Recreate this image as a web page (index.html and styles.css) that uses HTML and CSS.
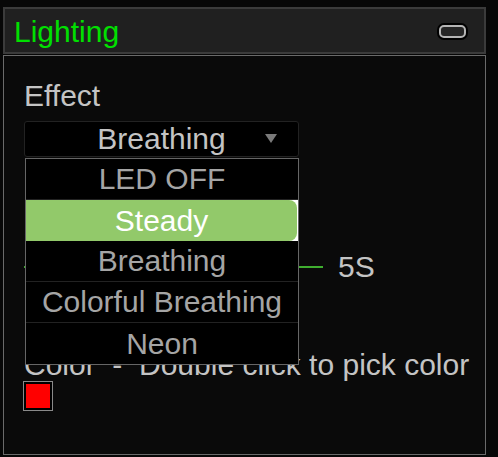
FILE: index.html
```html
<!DOCTYPE html>
<html lang="en">
<head>
    <meta charset="UTF-8">
    <meta name="viewport" content="width=device-width, initial-scale=1.0">
    <title>Lighting</title>
    <link rel="stylesheet" href="styles.css">
</head>
<body>

    <section class="panel">
        <header class="panel-header">
            <h1>Lighting</h1>
            <button class="btn-min" aria-label="Minimize"></button>
        </header>

        <div class="panel-body">
            <div class="field-label">Effect</div>
            <div class="select">
                <span class="select-value">Breathing</span>
                <span class="select-arrow"></span>

                <ul class="select-list">
                    <li>LED OFF</li>
                    <li class="active"><span>Steady</span></li>
                    <li>Breathing</li>
                    <li>Colorful Breathing</li>
                    <li>Neon</li>
                </ul>
            </div>

            <div class="field-label speed-label">Speed</div>
            <div class="slider-row">
                <div class="slider-track"></div>
                <span class="slider-value">5S</span>
            </div>

            <div class="field-label color-label">Color &nbsp;- &nbsp;Double click to pick color</div>
            <div class="swatch"><div class="swatch-fill"></div></div>
        </div>
    </section>

</body>
</html>
```

FILE: styles.css
```css
* {
    box-sizing: border-box;
}

body {
    margin: 0;
    background-color: #070707;
    font-family: 'Liberation Sans', Arial, sans-serif;
    width: 498px;
    height: 457px;
    overflow: hidden;
}

.panel {
    width: 483px;
    margin: 7px 0 0 3px;
}

.panel-header {
    height: 47px;
    background-color: #202020;
    border: 2px solid #3b3b3b;
    display: flex;
    align-items: center;
    justify-content: space-between;
    padding: 0 18px 0 9px;
}

.panel-header h1 {
    margin: 0;
    font-size: 30px;
    font-weight: normal;
    color: #00e000;
    line-height: 30px;
    padding-top: 2px;
}

.btn-min {
    width: 27px;
    height: 13px;
    padding: 0;
    background-color: #262626;
    border: 2px solid #b5b5b5;
    border-radius: 5px;
    box-shadow: 0 0 0 2px #000;
    margin-top: 1px;
}

.panel-body {
    height: 400px;
    margin-top: 1px;
    border: 1px solid #6a6a6a;
    background-color: #0a0a0a;
    padding: 25px 20px 0 20px;
}

.field-label {
    font-size: 30px;
    line-height: 30px;
    height: 30px;
    color: #c4c4c4;
    white-space: nowrap;
}

/* select + open list */
.select {
    position: relative;
    width: 275px;
    height: 36px;
    margin-top: 10px;
    background-color: #000;
    border: 1px solid #222;
    border-radius: 3px;
    display: flex;
    align-items: center;
    justify-content: center;
}

.select-value {
    font-size: 30px;
    color: #c4c4c4;
}

.select-arrow {
    position: absolute;
    right: 21px;
    top: 12px;
    width: 0;
    height: 0;
    border-left: 6px solid transparent;
    border-right: 6px solid transparent;
    border-top: 9px solid #7a7a7a;
}

.select-list {
    position: absolute;
    top: 36px;
    left: 0;
    width: 274px;
    margin: 0;
    padding: 0;
    list-style: none;
    background-color: #000;
    border: 1px solid #666;
    z-index: 2;
}

.select-list li {
    height: 41px;
    display: flex;
    align-items: center;
    justify-content: center;
    font-size: 30px;
    color: #a5a5a5;
    border-bottom: 1px solid #222;
}

.select-list li:last-child {
    border-bottom: none;
}

.select-list li.active {
    background-color: #fff;
    border-bottom: none;
    padding-right: 1px;
}

.select-list li.active span {
    flex: 1;
    height: 100%;
    display: flex;
    align-items: center;
    justify-content: center;
    background-color: #92c96a;
    color: #fff;
    border-radius: 0 8px 8px 0;
}

.speed-label {
    margin-top: 57px;
}

.slider-row {
    display: flex;
    align-items: center;
    height: 30px;
    margin-top: 8px;
}

.slider-track {
    width: 299px;
    height: 2px;
    background-color: #3fae2f;
}

.slider-value {
    font-size: 30px;
    color: #c4c4c4;
    margin-left: 15px;
}

.color-label {
    margin-top: 68px;
}

.swatch {
    width: 30px;
    height: 30px;
    margin-top: 1px;
    margin-left: -1px;
    border: 1px solid #8a8a8a;
    padding: 2px;
    background-color: #000;
}

.swatch-fill {
    width: 100%;
    height: 100%;
    background-color: #ff0000;
}
```
